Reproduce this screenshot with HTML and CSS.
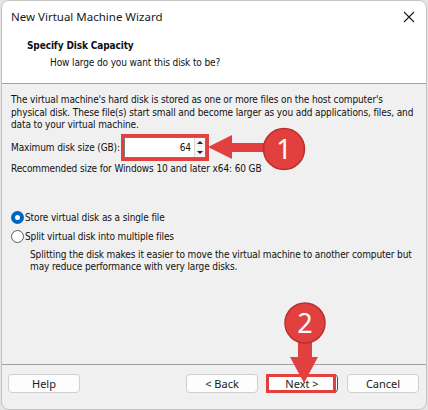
FILE: index.html
```html
<!DOCTYPE html>
<html lang="en">
<head>
  <meta charset="UTF-8" />
  <title>New Virtual Machine Wizard</title>
  <link rel="stylesheet" href="styles.css">
</head>
<body>
  <div class="window">
    <div class="titlebar">
      <span class="title">New Virtual Machine Wizard</span>
      <span class="close">
        <svg width="12" height="12" viewBox="0 0 12 12"><path d="M1 1 L11 11 M11 1 L1 11" stroke="#1a1a1a" stroke-width="1.1" fill="none"/></svg>
      </span>
    </div>

    <header class="page-head">
      <h1>Specify Disk Capacity</h1>
      <p>How large do you want this disk to be?</p>
    </header>

    <main class="content">
      <p class="intro">The virtual machine's hard disk is stored as one or more files on the host computer's physical disk. These file(s) start small and become larger as you add applications, files, and data to your virtual machine.</p>

      <div class="size-row">
        <label>Maximum disk size (GB):</label>
        <div class="spin highlight">
          <span class="spin-value">64</span>
          <span class="spin-btns">
            <span class="spin-up"></span>
            <span class="spin-down"></span>
          </span>
        </div>
      </div>

      <p class="recommend">Recommended size for Windows 10 and later x64: 60 GB</p>

      <div class="options">
        <div class="radio-row"><span class="radio checked"></span>Store virtual disk as a single file</div>
        <div class="radio-row"><span class="radio"></span>Split virtual disk into multiple files</div>
        <p class="option-note">Splitting the disk makes it easier to move the virtual machine to another computer but may reduce performance with very large disks.</p>
      </div>
    </main>

    <footer class="buttons">
      <button class="btn">Help</button>
      <span class="spacer"></span>
      <button class="btn">&lt; Back</button>
      <button class="btn btn-default">Next &gt;</button>
      <button class="btn">Cancel</button>
    </footer>
  </div>

  <!-- annotation arrows on top of the screenshot -->
  <svg class="notes" width="428" height="410" viewBox="0 0 428 410">
    <polygon points="208,147 232,135 232,143 268,143 268,152 232,152 232,159" fill="#e2403e"/>
    <circle cx="284" cy="149" r="20.5" fill="#e2403e" stroke="#b8302e" stroke-width="1.5"/>
    <text x="284" y="158.5" class="num">1</text>

    <polygon points="298,338 312,338 312,357 318,357 304,383 290,357 298,357" fill="#e2403e"/>
    <circle cx="305" cy="323" r="20" fill="#e2403e" stroke="#b8302e" stroke-width="1.5"/>
    <text x="305" y="332.5" class="num">2</text>
  </svg>
</body>
</html>
```

FILE: styles.css
```css
/* General */
body {
  margin: 0;
  width: 428px;
  height: 410px;
  background-color: #e4e4e4;
  position: relative;
  overflow: hidden;
  font-family: "DejaVu Sans", sans-serif;
  font-stretch: condensed;
  font-size: 10px;
  letter-spacing: -0.12px;
  color: #111;
}

.window {
  position: absolute;
  left: 1px;
  top: 0;
  width: 424px;
  height: 408px;
  border: 1px solid #c4c4c4;
  border-radius: 8px;
  overflow: hidden;
  background-color: #f0f0f0;
  display: flex;
  flex-direction: column;
}

/* Title bar */
.titlebar {
  height: 30px;
  background-color: #fff;
  display: flex;
  align-items: center;
  justify-content: space-between;
  padding: 0 8px 0 9px;
  font-family: "Noto Sans", sans-serif;
  font-stretch: normal;
  font-size: 11.5px;
  letter-spacing: 0;
  color: #1a1a1a;
}

.close {
  display: flex;
  width: 12px;
  height: 12px;
  margin-right: 3px;
  margin-top: 2px;
}

/* Page header */
.page-head {
  height: 52px;
  background-color: #fff;
  border-bottom: 1px solid #a0a0a0;
  padding: 0 0 0 25px;
}

.page-head h1 {
  margin: 8px 0 0;
  font-size: 10px;
  font-weight: bold;
  line-height: 14px;
}

.page-head p {
  margin: 3px 0 0 23px;
  line-height: 14px;
}

/* Content */
.content {
  flex: 1;
  padding: 0 9px;
}

.intro {
  margin: 10px 0 0;
  line-height: 12.7px;
}

.size-row {
  display: flex;
  align-items: center;
  gap: 4px;
  margin-top: 2px;
  height: 26px;
}

.spin {
  width: 80px;
  height: 19px;
  background-color: #fff;
  border: 1px solid #7a7a7a;
  display: flex;
  align-items: center;
  justify-content: flex-end;
}

.spin.highlight {
  outline: 3px solid #e2403e;
  outline-offset: 0;
}

.spin-value {
  padding-right: 3px;
}

.spin-btns {
  display: flex;
  flex-direction: column;
  gap: 1px;
  width: 10px;
  height: 19px;
  border-left: 1px solid #d8d8d8;
  background-color: #fff;
}

.spin-up,
.spin-down {
  flex: 1;
  position: relative;
  background-color: #f4f4f4;
}

.spin-up::after,
.spin-down::after {
  content: "";
  position: absolute;
  left: 2px;
  border-left: 3px solid transparent;
  border-right: 3px solid transparent;
}

.spin-up::after {
  top: 3px;
  border-bottom: 3px solid #222;
}

.spin-down::after {
  top: 3px;
  border-top: 3px solid #222;
}

.recommend {
  margin: 2px 0 0;
  line-height: 13px;
}

/* Options */
.options {
  margin-top: 33px;
}

.radio-row {
  display: flex;
  align-items: center;
  height: 19px;
  gap: 1px;
}

.radio {
  width: 11px;
  height: 11px;
  border: 1px solid #5a5a5a;
  border-radius: 50%;
  background-color: #fff;
}

.radio.checked {
  width: 5px;
  height: 5px;
  border: 4px solid #0067c0;
  background-color: #fff;
}

.option-note {
  margin: 2.5px 0 0 19px;
  line-height: 12.5px;
}

/* Buttons */
.buttons {
  height: 35px;
  border-top: 1px solid #a0a0a0;
  display: flex;
  align-items: flex-start;
  padding: 9px 0 0 6px;
  gap: 9px;
}

.spacer {
  width: 88px;
}

.btn {
  width: 72px;
  height: 19px;
  padding: 0;
  border: 1px solid #cfcfcf;
  border-radius: 4px;
  background-color: #fdfdfd;
  font-family: "Noto Sans", sans-serif;
  font-size: 11px;
  letter-spacing: 0;
  color: #1a1a1a;
  position: relative;
}

.btn-default {
  border-color: #0067c0;
  margin-left: -1px;
}

.btn-default::after {
  content: "";
  position: absolute;
  left: -1px;
  top: -1px;
  width: 64px;
  height: 13px;
  border: 3px solid #e2403e;
}

/* Annotation overlay */
.notes {
  position: absolute;
  left: 0;
  top: 0;
  pointer-events: none;
}

.num {
  fill: #fff;
  font-family: "Noto Sans", sans-serif;
  font-size: 27px;
  text-anchor: middle;
}
```
